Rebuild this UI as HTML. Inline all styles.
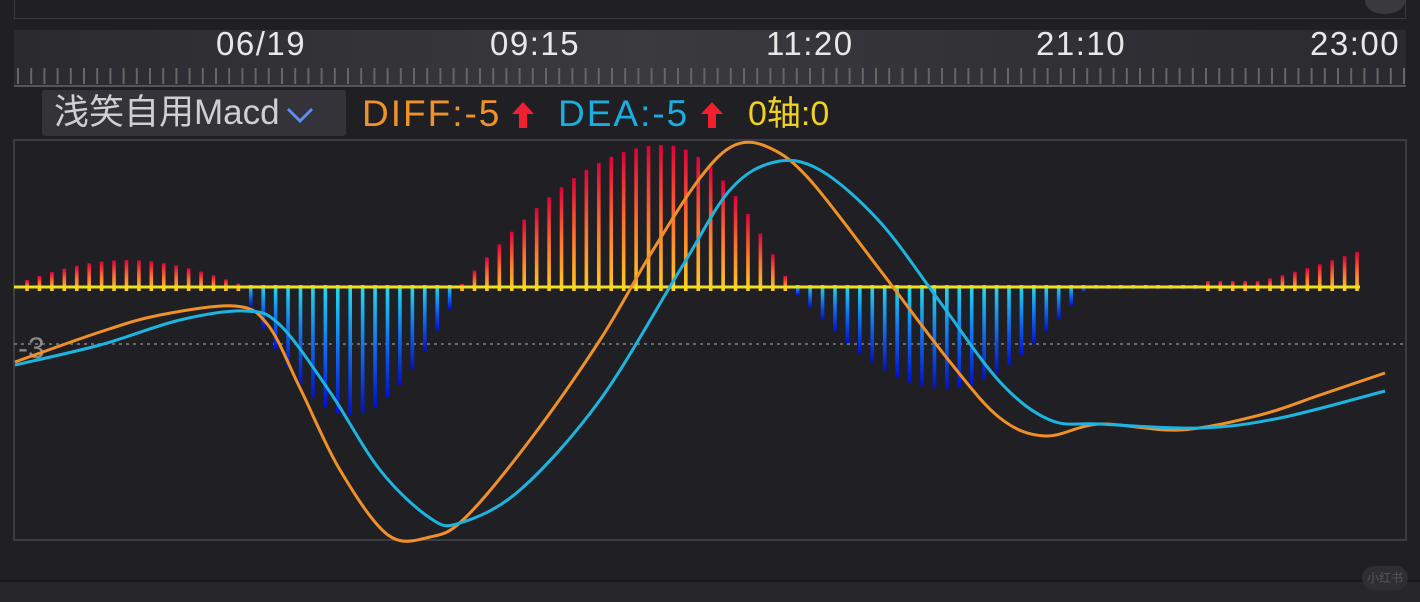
<!DOCTYPE html>
<html><head><meta charset="utf-8"><style>
body{margin:0;width:1420px;height:600px;background:#202024;overflow:hidden;position:relative;font-family:"Liberation Sans","Noto Sans CJK SC",sans-serif}
.toppanel{position:absolute;left:14px;top:-2px;width:1390px;height:20px;border:1px solid #3a3a40;border-top:none}
.axis{position:absolute;left:14px;top:30px;width:1392px;height:57px;background:linear-gradient(90deg,#2a2a2f,#3a3a3f 45%,#303035 75%,#2a2a2f)}
.lbl{position:absolute;top:25px;color:#e8e8e8;font-size:33px;letter-spacing:1.5px;font-family:"Liberation Sans",sans-serif}
.sel{position:absolute;left:42px;top:90px;width:304px;height:46px;background:#333339;border-radius:3px;color:#cfcfd2;font-size:35px;line-height:46px;padding-left:12px;box-sizing:border-box;white-space:nowrap}
.leg{position:absolute;top:92px;height:44px;line-height:44px;font-size:37px;letter-spacing:2px;font-family:"Liberation Sans","Noto Sans CJK SC",sans-serif;white-space:nowrap}
.bot{position:absolute;left:0;top:580px;width:1420px;height:20px;background:#27272b;border-top:2px solid #18181b}
.wm{position:absolute;left:1362px;top:566px;width:46px;height:24px;border-radius:12px;background:#2f2f33;color:#555;font-size:12px;text-align:center;line-height:24px}
.knob{position:absolute;left:1365px;top:-12px;width:40px;height:26px;border-radius:50%;background:#3a3a3e}
</style></head><body>
<div class="toppanel"></div><div class="knob"></div>
<div class="axis"></div>
<svg style="position:absolute;left:0;top:0" width="1420" height="600" id="s">
<g id="ticks"></g>
<line x1="14" y1="86" x2="1406" y2="86" stroke="#555" stroke-width="2"/>
<rect x="14" y="140" width="1392" height="400" fill="none" stroke="#3c3c42" stroke-width="2"/>
<line x1="14" y1="344" x2="1406" y2="344" stroke="#6a6a6a" stroke-width="2" stroke-dasharray="3 4"/>
<text x="18" y="358" fill="#8a8a8a" font-size="30" font-family="Liberation Sans">-3</text>
<defs>
<linearGradient id="rg" x1="0" y1="1" x2="0" y2="0"><stop offset="0" stop-color="#ffd020"/><stop offset="0.5" stop-color="#ff7030"/><stop offset="1" stop-color="#e0003a"/></linearGradient>
<linearGradient id="bg" x1="0" y1="0" x2="0" y2="1"><stop offset="0" stop-color="#20e0f0"/><stop offset="0.5" stop-color="#1070f0"/><stop offset="1" stop-color="#0010d0"/></linearGradient>
</defs>
<g id="bars"></g>
<line x1="14" y1="287" x2="1360" y2="287" stroke="#f0e020" stroke-width="3"/>
<path fill="none" stroke="#f09028" stroke-width="3" id="o"/>
<path fill="none" stroke="#1eb4e0" stroke-width="3" id="b"/>
</svg>
<div class="lbl" style="left:216px">06/19</div>
<div class="lbl" style="left:490px">09:15</div>
<div class="lbl" style="left:766px">11:20</div>
<div class="lbl" style="left:1036px">21:10</div>
<div class="lbl" style="left:1310px">23:00</div>
<div class="sel">浅笑自用Macd <svg width="30" height="20" style="vertical-align:middle;margin-left:-4px"><path d="M3 4 L15 16 L27 4" fill="none" stroke="#5b8ff0" stroke-width="3"/></svg></div>
<div class="leg" style="left:362px;color:#f0922a">DIFF:-5</div>
<div class="leg" style="left:558px;color:#1aaee0">DEA:-5</div>
<div class="leg" style="left:748px;color:#f0d020;letter-spacing:0;font-size:34px">0轴:0</div>
<svg style="position:absolute;left:510px;top:100px" width="26" height="30"><path d="M13 2 L24 14 L17 14 L17 28 L9 28 L9 14 L2 14 Z" fill="#f02030"/></svg>
<svg style="position:absolute;left:699px;top:100px" width="26" height="30"><path d="M13 2 L24 14 L17 14 L17 28 L9 28 L9 14 L2 14 Z" fill="#f02030"/></svg>
<div class="bot"></div>
<div class="wm">小红书</div>
<script>
var NS="http://www.w3.org/2000/svg";
function el(t,a,p){var e=document.createElementNS(NS,t);for(var k in a)e.setAttribute(k,a[k]);document.getElementById(p).appendChild(e);}
for(var x=18;x<1406;x+=13.2){el("line",{x1:x,y1:68,x2:x,y2:84,stroke:"#666","stroke-width":2},"ticks");}
function seg(x,a,b,pk,h){if(x<a||x>b)return null;var t;if(x<=pk)t=(x-a)/(pk-a)*0.5;else t=0.5+(x-pk)/(b-pk)*0.5;return h*Math.sin(Math.PI*t);}
for(var i=1;i<=108;i++){var x=14.6+12.43*i,v=null;
 v=seg(x,15,240,127,24);
 if(v===null)v=seg(x,240,462,350,-128);
 if(v===null)v=seg(x,462,790,665,139);
 if(v===null)v=seg(x,790,1088,945,-102);
 if(v===null&&x>1088&&x<1252)v=(x<1200?-3:3);
 if(v===null&&x>=1252)v=2+30*Math.pow((x-1252)/105,1.2);
 if(v===null)v=2;
 if(v>=0)el("rect",{x:x-1.8,y:287-v-3,width:3.6,height:v+7,fill:"url(#rg)"},"bars");
 else el("rect",{x:x-1.8,y:285,width:3.6,height:-v+2,fill:"url(#bg)"},"bars");}
function path(p){var d="M"+p[0][0]+" "+p[0][1];for(var i=0;i<p.length-1;i++){var p0=p[i-1]||p[i],p1=p[i],p2=p[i+1],p3=p[i+2]||p2;
d+=" C"+(p1[0]+(p2[0]-p0[0])/6)+" "+(p1[1]+(p2[1]-p0[1])/6)+" "+(p2[0]-(p3[0]-p1[0])/6)+" "+(p2[1]-(p3[1]-p1[1])/6)+" "+p2[0]+" "+p2[1];}return d;}
document.getElementById("o").setAttribute("d",path([[15,362],[100,332],[160,315],[235,306],[268,325],[300,388],[340,470],[388,535],[430,537],[465,518],[530,440],[600,340],[650,255],[700,178],[735,145],[770,148],[810,180],[880,270],[950,362],[1000,418],[1045,436],[1100,424],[1180,430],[1260,415],[1320,395],[1385,373]]));
document.getElementById("b").setAttribute("d",path([[15,365],[100,345],[180,320],[245,311],[280,325],[330,392],[380,470],[430,518],[460,523],[520,490],[600,400],[680,270],[730,190],[775,162],[820,170],[880,222],[940,302],[1000,382],[1050,420],[1100,424],[1200,428],[1280,418],[1385,391]]));
</script>
</body></html>
